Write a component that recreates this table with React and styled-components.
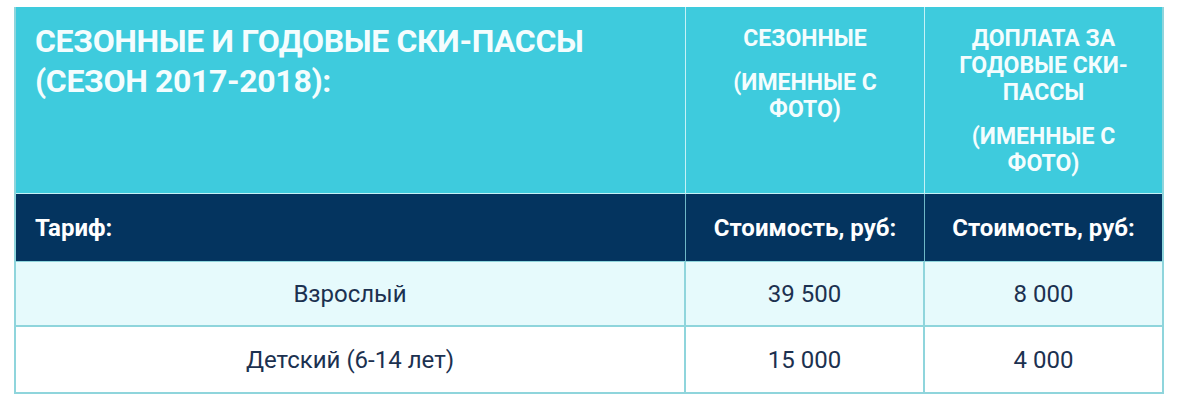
import React from "react";
import styled, { createGlobalStyle } from "styled-components";

const Global = createGlobalStyle`
  html, body { margin: 0; padding: 0; background: #ffffff; }
  body { font-family: Roboto, "Open Sans", sans-serif; }
`;

const Page = styled.div`
  padding: 7px 14px;
`;

const Table = styled.div`
  display: grid;
  grid-template-columns: 670px 239px 237px;
  grid-template-rows: 187px 68px 65px 65px;
  width: 1150px;
  box-sizing: border-box;
  border: 2px solid #8fd5dc;
  border-top: none;
`;

const HeadCell = styled.div`
  background: #3ecbdd;
  color: #f4fdfe;
  font-weight: 700;
  box-sizing: border-box;
  border-right: ${(p) => (p.$last ? "none" : "1px solid #c6f1f6")};
  border-bottom: 1px solid #c6f1f6;
  text-align: ${(p) => (p.$center ? "center" : "left")};
  padding: ${(p) => (p.$center ? "18px 10px 0" : "14px 19px 0")};
`;

const Title = styled.div`
  font-size: 32px;
  line-height: 40px;
  letter-spacing: -0.35px;
`;

const SubTitle = styled.div`
  font-size: 23px;
  line-height: 27px;
  & + & { margin-top: 17px; }
`;

const DarkCell = styled.div`
  background: #04345f;
  color: #ffffff;
  font-weight: 700;
  font-size: 24px;
  display: flex;
  align-items: center;
  justify-content: ${(p) => (p.$center ? "center" : "flex-start")};
  padding: 0 19px;
  box-sizing: border-box;
  border-right: ${(p) => (p.$last ? "none" : "1px solid #6fb7c6")};
  border-bottom: 1px solid #8fd5dc;
`;

const BodyCell = styled.div`
  background: ${(p) => (p.$tint ? "#e6fafc" : "#ffffff")};
  color: #1c3150;
  font-size: 24px;
  font-weight: 400;
  display: flex;
  align-items: center;
  justify-content: center;
  box-sizing: border-box;
  border-right: ${(p) => (p.$last ? "none" : "2px solid #8fd5dc")};
  border-bottom: ${(p) => (p.$bottom ? "none" : "2px solid #8fd5dc")};
`;

const rows = [
  { name: "Взрослый", a: "39 500", b: "8 000", tint: true },
  { name: "Детский (6-14 лет)", a: "15 000", b: "4 000", tint: false },
];

export default function App() {
  return (
    <Page>
      <Global />
      <Table>
        <HeadCell>
          <Title>
            СЕЗОННЫЕ И ГОДОВЫЕ СКИ-ПАССЫ
            <br />
            (СЕЗОН 2017-2018):
          </Title>
        </HeadCell>
        <HeadCell $center>
          <SubTitle>СЕЗОННЫЕ</SubTitle>
          <SubTitle>
            (ИМЕННЫЕ С<br />ФОТО)
          </SubTitle>
        </HeadCell>
        <HeadCell $center $last>
          <SubTitle>
            ДОПЛАТА ЗА<br />ГОДОВЫЕ СКИ-<br />ПАССЫ
          </SubTitle>
          <SubTitle>
            (ИМЕННЫЕ С<br />ФОТО)
          </SubTitle>
        </HeadCell>

        <DarkCell>Тариф:</DarkCell>
        <DarkCell $center>Стоимость, руб:</DarkCell>
        <DarkCell $center $last>Стоимость, руб:</DarkCell>

        {rows.map((r, i) => (
          <React.Fragment key={r.name}>
            <BodyCell $tint={r.tint} $bottom={i === rows.length - 1}>{r.name}</BodyCell>
            <BodyCell $tint={r.tint} $bottom={i === rows.length - 1}>{r.a}</BodyCell>
            <BodyCell $tint={r.tint} $bottom={i === rows.length - 1} $last>{r.b}</BodyCell>
          </React.Fragment>
        ))}
      </Table>
    </Page>
  );
}
